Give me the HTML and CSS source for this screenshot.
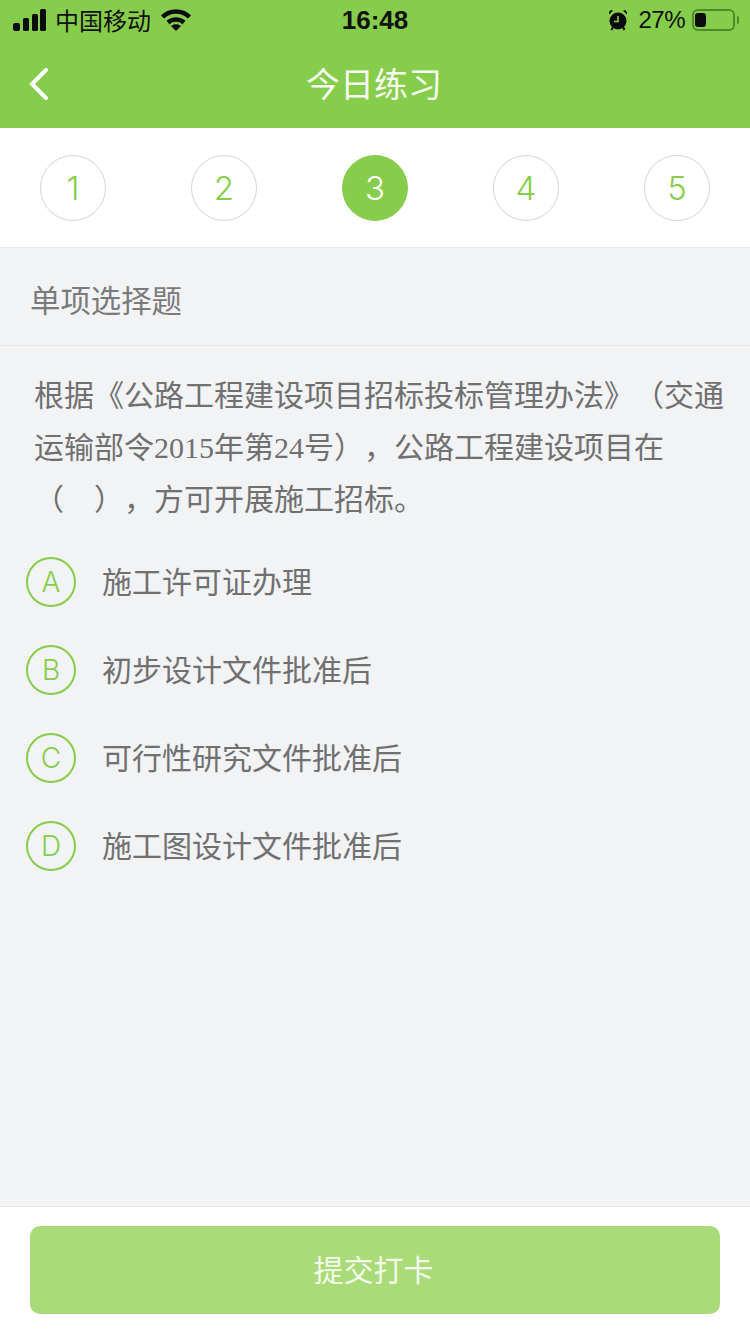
FILE: index.html
```html
<!DOCTYPE html>
<html lang="zh-CN">
<head>
    <meta charset="UTF-8">
    <meta name="viewport" content="width=device-width, initial-scale=1.0">
    <title>今日练习</title>
    <link rel="stylesheet" href="styles.css">
</head>
<body>

    <div class="page">
        <header class="top">
            <div class="status">
                <div class="status-left">
                    <svg class="signal" width="33" height="22" viewBox="0 0 33 22">
                        <rect x="0" y="14" width="7" height="8" rx="2"/>
                        <rect x="10" y="9" width="6" height="13" rx="1.5"/>
                        <rect x="19" y="5" width="6" height="17" rx="1.5"/>
                        <rect x="27" y="0" width="6" height="22" rx="1.5"/>
                    </svg>
                    <span class="carrier">中国移动</span>
                    <svg class="wifi" width="30" height="22" viewBox="0 0 30 22">
                        <path d="M1.5 8 C9 .5 21 .5 28.500 8" />
                        <path d="M7 13.500 C11.500 9.500 18.500 9.500 23 13.500" />
                        <path class="wifi-dot" d="M15 22 L10 17 C13 14.800 17 14.800 20 17 Z"/>
                    </svg>
                </div>
                <div class="time">16:48</div>
                <div class="status-right">
                    <svg class="alarm" width="18" height="20" viewBox="0 0 18 20">
                        <circle cx="9" cy="11" r="8.500"/>
                        <path class="hand" d="M9 6 V11.500 H5"/>
                        <path d="M0 4.500 L4 .8 L2 0 Q-.4 1 0 4.500Z M18 4.500 L14 .8 L16 0 Q18.400 1 18 4.500Z"/>
                        <path class="leg" d="M4 17 L2.500 20 M14 17 L15.500 20"/>
                    </svg>
                    <span class="percent">27%</span>
                    <div class="battery"><div class="battery-level"></div></div>
                    <div class="battery-tip"></div>
                </div>
            </div>
            <div class="navbar">
                <svg class="back" width="20" height="32" viewBox="0 0 20 32">
                    <path d="M17 2 L3 16 L17 30"/>
                </svg>
                <h1>今日练习</h1>
            </div>
        </header>

        <nav class="steps">
            <div class="step">1</div>
            <div class="step">2</div>
            <div class="step active">3</div>
            <div class="step">4</div>
            <div class="step">5</div>
        </nav>

        <div class="type">单项选择题</div>

        <main class="question">
            <p class="stem">根据《公路工程建设项目招标投标管理办法》（交通运输部令2015年第24号），公路工程建设项目在（&nbsp;&nbsp;&nbsp;&nbsp;），方可开展施工招标。</p>
            <div class="option"><span class="letter">A</span><span class="option-text">施工许可证办理</span></div>
            <div class="option"><span class="letter">B</span><span class="option-text">初步设计文件批准后</span></div>
            <div class="option"><span class="letter">C</span><span class="option-text">可行性研究文件批准后</span></div>
            <div class="option"><span class="letter">D</span><span class="option-text">施工图设计文件批准后</span></div>
        </main>

        <footer class="bottom">
            <button class="submit">提交打卡</button>
        </footer>
    </div>

</body>
</html>
```

FILE: styles.css
```css
* {
    box-sizing: border-box;
}

html, body {
    margin: 0;
    padding: 0;
}

body {
    font-family: "Liberation Sans", "Noto Sans CJK SC", sans-serif;
    background: #f2f3f5;
    color: #707070;
}

.page {
    width: 750px;
    height: 1334px;
    display: flex;
    flex-direction: column;
    overflow: hidden;
}

/* green header */
.top {
    height: 128px;
    background: #86cd4b;
}

.status {
    height: 40px;
    padding: 0 11px 0 13px;
    display: flex;
    align-items: center;
    justify-content: space-between;
    color: #111;
    position: relative;
}

.status-left, .status-right {
    display: flex;
    align-items: center;
}

.signal {
    fill: #0c0c0c;
}

.carrier {
    font-size: 24px;
    margin-left: 9px;
    padding-bottom: 2px;
}

.wifi {
    margin-left: 10px;
    fill: none;
    stroke: #0c0c0c;
    stroke-width: 4.5;
}

.wifi-dot {
    fill: #0c0c0c;
    stroke: none;
}

.time {
    position: absolute;
    left: 0;
    right: 0;
    text-align: center;
    font-size: 26px;
    font-weight: bold;
}

.alarm {
    fill: #0c0c0c;
    overflow: visible;
}

.alarm .hand {
    fill: none;
    stroke: #86cd4b;
    stroke-width: 1.6;
}

.alarm .leg {
    fill: none;
    stroke: #0c0c0c;
    stroke-width: 2;
}

.percent {
    font-size: 24px;
    letter-spacing: -0.5px;
    margin-left: 11px;
}

.battery {
    width: 43px;
    height: 22px;
    margin-left: 7px;
    border: 2px solid #4f8a2a;
    border-radius: 6px;
    padding: 2px 1px;
}

.battery-level {
    width: 11px;
    height: 14px;
    background: #0c0c0c;
    border-radius: 3px;
}

.battery-tip {
    width: 2px;
    height: 8px;
    margin-left: 2px;
    background: #4f8a2a;
    border-radius: 0 2px 2px 0;
}

.navbar {
    height: 88px;
    position: relative;
    display: flex;
    align-items: center;
    justify-content: center;
}

.navbar h1 {
    margin: 0;
    padding: 0 2px 4px 0;
    font-size: 34px;
    font-weight: normal;
    color: #f7fbf2;
}

.back {
    position: absolute;
    left: 29px;
    top: 28px;
    fill: none;
    stroke: #fff;
    stroke-width: 4;
    stroke-linecap: round;
}

/* step circles */
.steps {
    height: 120px;
    background: #fff;
    border-bottom: 1px solid #e6e6e6;
    padding: 0 40px;
    display: flex;
    align-items: center;
    justify-content: space-between;
}

.step {
    width: 66px;
    height: 66px;
    border: 1px solid #d4d4d4;
    border-radius: 50%;
    display: flex;
    align-items: center;
    justify-content: center;
    font-family: Inter, Roboto, sans-serif;
    font-weight: 300;
    font-size: 33px;
    color: #86cd4b;
    margin-top: 1px;
}

.step.active {
    background: #86cd4b;
    border-color: #86cd4b;
    color: #fff;
}

.type {
    height: 98px;
    padding: 5px 30px 0;
    display: flex;
    align-items: center;
    font-size: 30.4px;
    color: #7a7a7a;
    border-bottom: 1px solid #e8e8e8;
}

.question {
    flex: 1;
    padding: 24px 25px 0 26px;
}

.stem {
    margin: 0 0 12px;
    padding: 0 0 0 8px;
    font-family: "Liberation Serif", "Noto Sans CJK SC", serif;
    font-size: 30px;
    line-height: 52px;
    color: #707070;
    text-spacing-trim: space-all;
}

.option {
    height: 88px;
    display: flex;
    align-items: center;
    font-size: 30px;
    color: #707070;
}

.option-text {
    padding-bottom: 4px;
}

.letter {
    width: 50px;
    height: 50px;
    margin-right: 26px;
    border: 2px solid #86cd4b;
    border-radius: 50%;
    display: flex;
    align-items: center;
    justify-content: center;
    font-family: Inter, Roboto, sans-serif;
    font-weight: 300;
    font-size: 28px;
    color: #86cd4b;
}

.bottom {
    height: 128px;
    background: #fff;
    border-top: 1px solid #e6e6e6;
    padding: 19px 30px 0;
}

.submit {
    width: 690px;
    height: 88px;
    padding: 0 3px 4px 0;
    border: none;
    border-radius: 10px;
    background: #a9dc78;
    color: #f4faec;
    font-family: inherit;
    font-size: 30px;
}
```
